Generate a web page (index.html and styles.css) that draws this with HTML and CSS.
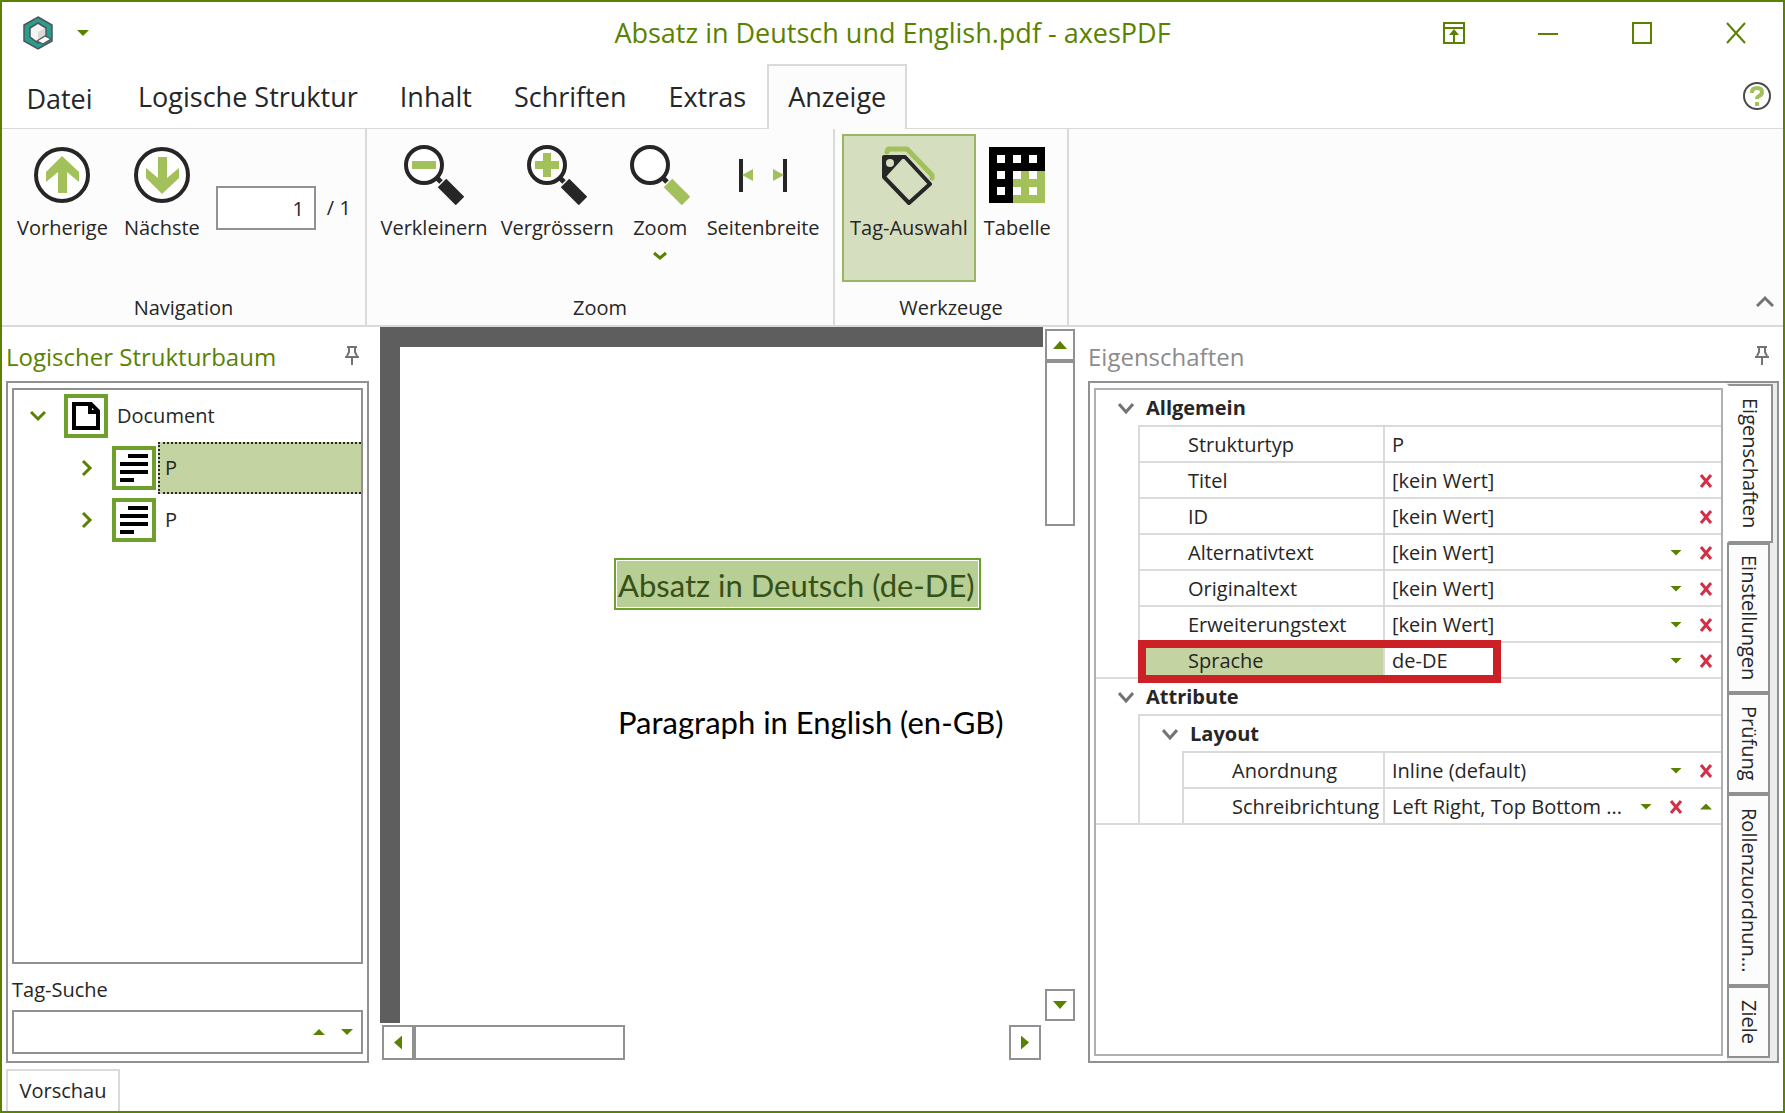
FILE: index.html
```html
<!DOCTYPE html>
<html lang="de">

<head>
  <meta charset="utf-8">
  <title>Absatz in Deutsch und English.pdf - axesPDF</title>
  <link rel="stylesheet" href="styles.css">
</head>

<body>
  <header class="titlebar">
    <div class="quick-access">
      <svg width="30" height="34" viewBox="0 0 30 34">
        <path d="M15 1 L29 9 V25 L15 33 L1 25 V9 Z" fill="#2a9d8f" stroke="#4d5557" stroke-width="1.5" />
        <path d="M15 7 L23 12 V21 L15 27 L7 21 V12 Z" fill="#f4f4f4" stroke="#4d5557" stroke-width="1.5" />
        <path d="M15 16 L22 12 V21 L15 26 Z" fill="#d9d9d9" />
        <path d="M14 25 L22 20 L28 23 L20 28 Z" fill="#fff" stroke="#4d5557" stroke-width="1.2" />
      </svg>
      <button class="plain" aria-label="Schnellzugriff"><i class="tri tri-down"></i></button>
    </div>
    <h1>Absatz in Deutsch und English.pdf - axesPDF</h1>
    <div class="window-buttons">
      <button aria-label="Menüband">
        <svg width="22" height="22" viewBox="0 0 22 22" fill="none" stroke="#5a8200" stroke-width="2">
          <path d="M1 1 H21 V21 H1 Z M1 6 H21 M11 21 V10" />
          <path d="M6 13 L11 7 L16 13 Z" fill="#5a8200" stroke="none" />
        </svg>
      </button>
      <button aria-label="Minimieren">
        <svg width="20" height="22" viewBox="0 0 20 22"><path d="M0 12 H20" stroke="#5a8200" stroke-width="2" /></svg>
      </button>
      <button aria-label="Maximieren">
        <svg width="20" height="22" viewBox="0 0 20 22"><path d="M1 1 H19 V21 H1 Z" fill="none" stroke="#5a8200" stroke-width="2" /></svg>
      </button>
      <button aria-label="Schliessen">
        <svg width="20" height="22" viewBox="0 0 20 22"><path d="M1 1 L19 21 M19 1 L1 21" stroke="#5a8200" stroke-width="2" /></svg>
      </button>
    </div>
  </header>

  <nav class="tabs">
    <button class="tab tab-file">Datei</button>
    <button class="tab">Logische Struktur</button>
    <button class="tab">Inhalt</button>
    <button class="tab">Schriften</button>
    <button class="tab">Extras</button>
    <button class="tab active">Anzeige</button>
    <button class="plain help" aria-label="Hilfe">
      <svg width="30" height="30" viewBox="0 0 30 30" fill="none">
        <circle cx="15" cy="15" r="13" stroke="#4a4a4a" stroke-width="2" />
        <path d="M10 12 V11 Q10 7 15 7 Q20 7 20 11 Q20 14 17 15 Q15 16 15 18" stroke="#a2c15a" stroke-width="4" />
        <path d="M13 21 H17 V25 H13 Z" fill="#a2c15a" />
      </svg>
    </button>
  </nav>

  <section class="ribbon">
    <div class="group group-nav">
      <div class="tools">
        <button class="tool">
          <svg width="58" height="60" viewBox="0 0 58 58">
            <circle cx="29" cy="29" r="26" fill="#fff" stroke="#262626" stroke-width="4" />
            <path d="M29 10 L46 26 V36 L34 26 V47 H25 V26 L13 36 V26 Z" fill="#a2c15a" />
          </svg>
          Vorherige
        </button>
        <button class="tool">
          <svg width="58" height="60" viewBox="0 0 58 58">
            <circle cx="29" cy="29" r="26" fill="#fff" stroke="#262626" stroke-width="4" />
            <path d="M29 48 L46 32 V22 L34 32 V11 H25 V32 L13 22 V32 Z" fill="#a2c15a" />
          </svg>
          Nächste
        </button>
        <div class="page-number">
          <input type="text" value="1" id="page-number" aria-label="Seite">
          <label for="page-number">/ 1</label>
        </div>
      </div>
      <h2>Navigation</h2>
    </div>

    <div class="group group-zoom">
      <div class="tools">
        <button class="tool">
          <svg width="60" height="60" viewBox="0 0 60 60">
            <circle cx="20" cy="20" r="18" fill="#fff" stroke="#262626" stroke-width="4" />
            <path d="M32 32 L37 37" stroke="#262626" stroke-width="5" />
            <path d="M38 38 L56 56" stroke="#262626" stroke-width="12" />
            <path d="M8 16 H32 V24 H8 Z" fill="#a2c15a" />
          </svg>
          Verkleinern
        </button>
        <button class="tool">
          <svg width="60" height="60" viewBox="0 0 60 60">
            <circle cx="20" cy="20" r="18" fill="#fff" stroke="#262626" stroke-width="4" />
            <path d="M32 32 L37 37" stroke="#262626" stroke-width="5" />
            <path d="M38 38 L56 56" stroke="#262626" stroke-width="12" />
            <path d="M8 16 H16 V8 H24 V16 H32 V24 H24 V32 H16 V24 H8 Z" fill="#a2c15a" />
          </svg>
          Vergrössern
        </button>
        <button class="tool">
          <svg width="60" height="60" viewBox="0 0 60 60">
            <circle cx="20" cy="20" r="18" fill="#fff" stroke="#262626" stroke-width="4" />
            <path d="M32 32 L37 37" stroke="#262626" stroke-width="5" />
            <path d="M38 38 L56 56" stroke="#a2c15a" stroke-width="12" />
          </svg>
          Zoom
          <svg class="more" width="14" height="10" viewBox="0 0 14 10"><path d="M1 2 L7 7 L13 2" fill="none" stroke="#5a8200" stroke-width="3" /></svg>
        </button>
        <button class="tool">
          <svg width="50" height="60" viewBox="0 0 50 60">
            <path d="M1 14 H5 V47 H1 Z M45 14 H49 V47 H45 Z" fill="#262626" />
            <path d="M4 30 L15 24 V36 Z M46 30 L35 24 V36 Z" fill="#a2c15a" />
          </svg>
          Seitenbreite
        </button>
      </div>
      <h2>Zoom</h2>
    </div>

    <div class="group group-tools">
      <div class="tools">
        <button class="tool pressed">
          <svg width="58" height="60" viewBox="0 0 58 58" fill="none">
            <path d="M7 6 L8 3 H27 L52 29 V32" stroke="#a2c15a" stroke-width="5" stroke-linejoin="round" stroke-linecap="round" />
            <path d="M4 11 H25 L50 38 L29 57 L4 31 Z" fill="#d5debf" stroke="#262626" stroke-width="4" stroke-linejoin="round" />
            <path d="M3 10 H25 L5 32 Z" fill="#262626" />
            <circle cx="10" cy="17" r="4" fill="#d5debf" />
          </svg>
          Tag-Auswahl
        </button>
        <button class="tool">
          <svg width="58" height="60" viewBox="0 0 58 58">
            <path d="M1 1 H57 V57 H1 Z" fill="#000" />
            <path d="M25 25 H57 V57 H25 Z" fill="#a2c15a" />
            <path d="M9 9h8v8h-8z M25 9h8v8h-8z M41 9h8v8h-8z M9 25h8v8h-8z M25 25h8v8h-8z M41 25h8v8h-8z M9 41h8v8h-8z M25 41h8v8h-8z M41 41h8v8h-8z" fill="#fff" />
          </svg>
          Tabelle
        </button>
      </div>
      <h2>Werkzeuge</h2>
    </div>

    <button class="plain collapse" aria-label="Menüband reduzieren">
      <svg width="18" height="12" viewBox="0 0 18 12"><path d="M1 11 L9 3 L17 11" fill="none" stroke="#737373" stroke-width="3" /></svg>
    </button>
  </section>

  <main class="workspace">
    <aside class="panel panel-tree">
      <div class="panel-head">
        <h2>Logischer Strukturbaum</h2>
        <button class="plain" aria-label="Anheften">
          <svg width="14" height="19" viewBox="0 0 14 19" fill="none" stroke="#737373" stroke-width="2"><path d="M2 1 H12 M4 1 V6 L2 10 M10 1 V6 L12 10 M0 11 H14 M7 11 V19" /></svg>
        </button>
      </div>
      <div class="panel-body">
        <ul class="tree">
          <li>
            <button class="plain toggle" aria-label="Zuklappen">
              <svg width="16" height="16" viewBox="0 0 16 16"><path d="M1 4 L8 11 L15 4" fill="none" stroke="#5a8200" stroke-width="3" /></svg>
            </button>
            <svg width="44" height="44" viewBox="0 0 44 44">
              <path d="M2 2 H42 V42 H2 Z" fill="#fff" stroke="#6fa02d" stroke-width="4" />
              <path d="M10 10 H27 L34 17 V34 H10 Z" fill="#fff" stroke="#000" stroke-width="4" />
              <path d="M24 10 H28 V16 H34 V20 H24 Z" fill="#000" />
            </svg>
            <span class="node">Document</span>
          </li>
          <li class="child">
            <button class="plain toggle" aria-label="Aufklappen">
              <svg width="16" height="16" viewBox="0 0 16 16"><path d="M5 1 L12 8 L5 15" fill="none" stroke="#5a8200" stroke-width="3" /></svg>
            </button>
            <svg width="44" height="44" viewBox="0 0 44 44">
              <path d="M2 2 H42 V42 H2 Z" fill="#fff" stroke="#6fa02d" stroke-width="4" />
              <path d="M16 10 H36 M8 18 H36 M8 26 H36 M8 34 H22" stroke="#000" stroke-width="4" />
            </svg>
            <span class="node selected">P</span>
          </li>
          <li class="child">
            <button class="plain toggle" aria-label="Aufklappen">
              <svg width="16" height="16" viewBox="0 0 16 16"><path d="M5 1 L12 8 L5 15" fill="none" stroke="#5a8200" stroke-width="3" /></svg>
            </button>
            <svg width="44" height="44" viewBox="0 0 44 44">
              <path d="M2 2 H42 V42 H2 Z" fill="#fff" stroke="#6fa02d" stroke-width="4" />
              <path d="M16 10 H36 M8 18 H36 M8 26 H36 M8 34 H22" stroke="#000" stroke-width="4" />
            </svg>
            <span class="node">P</span>
          </li>
        </ul>
        <label for="tag-search">Tag-Suche</label>
        <div class="search">
          <input type="text" id="tag-search">
          <button class="plain" aria-label="Vorheriger Treffer"><i class="tri tri-up"></i></button>
          <button class="plain" aria-label="Nächster Treffer"><i class="tri tri-down"></i></button>
        </div>
      </div>
    </aside>

    <section class="viewer">
      <div class="canvas">
        <div class="page">
          <p class="highlight">Absatz in Deutsch (de-DE)</p>
          <p lang="en">Paragraph in English (en-GB)</p>
        </div>
      </div>
      <div class="scroll-v">
        <button aria-label="Nach oben"><i class="tri tri-up big"></i></button>
        <div class="thumb"></div>
        <button class="end" aria-label="Nach unten"><i class="tri tri-down big"></i></button>
      </div>
      <div class="scroll-h">
        <button aria-label="Nach links"><i class="tri tri-left"></i></button>
        <div class="thumb"></div>
        <button class="end" aria-label="Nach rechts"><i class="tri tri-right"></i></button>
      </div>
    </section>

    <aside class="panel panel-props">
      <div class="panel-head">
        <h2>Eigenschaften</h2>
        <button class="plain" aria-label="Anheften">
          <svg width="14" height="19" viewBox="0 0 14 19" fill="none" stroke="#737373" stroke-width="2"><path d="M2 1 H12 M4 1 V6 L2 10 M10 1 V6 L12 10 M0 11 H14 M7 11 V19" /></svg>
        </button>
      </div>
      <div class="panel-body">
        <div class="grid-box">
          <table>
            <colgroup>
              <col class="col-indent">
              <col class="col-level">
              <col class="col-name">
              <col>
            </colgroup>
            <tr class="head">
              <th colspan="4"><svg width="16" height="12" viewBox="0 0 16 12"><path d="M1 1 L8 9 L15 1" fill="none" stroke="#737373" stroke-width="3" /></svg>Allgemein</th>
            </tr>
            <tr>
              <td></td>
              <td class="name" colspan="2">Strukturtyp</td>
              <td class="value"><div>P</div></td>
            </tr>
            <tr>
              <td></td>
              <td class="name" colspan="2">Titel</td>
              <td class="value"><div><span>[kein Wert]</span><button class="plain" aria-label="Löschen"><svg width="14" height="14" viewBox="0 0 14 14"><path d="M2 1 L12 13 M12 1 L2 13" stroke="#d32f45" stroke-width="3" /></svg></button></div></td>
            </tr>
            <tr>
              <td></td>
              <td class="name" colspan="2">ID</td>
              <td class="value"><div><span>[kein Wert]</span><button class="plain" aria-label="Löschen"><svg width="14" height="14" viewBox="0 0 14 14"><path d="M2 1 L12 13 M12 1 L2 13" stroke="#d32f45" stroke-width="3" /></svg></button></div></td>
            </tr>
            <tr>
              <td></td>
              <td class="name" colspan="2">Alternativtext</td>
              <td class="value"><div><span>[kein Wert]</span><button class="plain" aria-label="Öffnen"><i class="tri tri-down"></i></button><button class="plain" aria-label="Löschen"><svg width="14" height="14" viewBox="0 0 14 14"><path d="M2 1 L12 13 M12 1 L2 13" stroke="#d32f45" stroke-width="3" /></svg></button></div></td>
            </tr>
            <tr>
              <td></td>
              <td class="name" colspan="2">Originaltext</td>
              <td class="value"><div><span>[kein Wert]</span><button class="plain" aria-label="Öffnen"><i class="tri tri-down"></i></button><button class="plain" aria-label="Löschen"><svg width="14" height="14" viewBox="0 0 14 14"><path d="M2 1 L12 13 M12 1 L2 13" stroke="#d32f45" stroke-width="3" /></svg></button></div></td>
            </tr>
            <tr>
              <td></td>
              <td class="name" colspan="2">Erweiterungstext</td>
              <td class="value"><div><span>[kein Wert]</span><button class="plain" aria-label="Öffnen"><i class="tri tri-down"></i></button><button class="plain" aria-label="Löschen"><svg width="14" height="14" viewBox="0 0 14 14"><path d="M2 1 L12 13 M12 1 L2 13" stroke="#d32f45" stroke-width="3" /></svg></button></div></td>
            </tr>
            <tr>
              <td></td>
              <td class="name marked" colspan="2">Sprache<div class="marker"></div></td>
              <td class="value"><div><span>de-DE</span><button class="plain" aria-label="Öffnen"><i class="tri tri-down"></i></button><button class="plain" aria-label="Löschen"><svg width="14" height="14" viewBox="0 0 14 14"><path d="M2 1 L12 13 M12 1 L2 13" stroke="#d32f45" stroke-width="3" /></svg></button></div></td>
            </tr>
            <tr class="head">
              <th class="line" colspan="4"><svg width="16" height="12" viewBox="0 0 16 12"><path d="M1 1 L8 9 L15 1" fill="none" stroke="#737373" stroke-width="3" /></svg>Attribute</th>
            </tr>
            <tr class="head">
              <td></td>
              <th class="line sub" colspan="3"><svg width="16" height="12" viewBox="0 0 16 12"><path d="M1 1 L8 9 L15 1" fill="none" stroke="#737373" stroke-width="3" /></svg>Layout</th>
            </tr>
            <tr>
              <td></td>
              <td class="level"></td>
              <td class="name">Anordnung</td>
              <td class="value"><div><span>Inline (default)</span><button class="plain" aria-label="Öffnen"><i class="tri tri-down"></i></button><button class="plain" aria-label="Löschen"><svg width="14" height="14" viewBox="0 0 14 14"><path d="M2 1 L12 13 M12 1 L2 13" stroke="#d32f45" stroke-width="3" /></svg></button></div></td>
            </tr>
            <tr class="last">
              <td></td>
              <td class="level"></td>
              <td class="name">Schreibrichtung</td>
              <td class="value"><div><span>Left Right, Top Bottom ...</span><button class="plain" aria-label="Öffnen"><i class="tri tri-down"></i></button><button class="plain" aria-label="Löschen"><svg width="14" height="14" viewBox="0 0 14 14"><path d="M2 1 L12 13 M12 1 L2 13" stroke="#d32f45" stroke-width="3" /></svg></button><button class="plain" aria-label="Übernehmen"><i class="tri tri-up"></i></button></div></td>
            </tr>
          </table>
        </div>
        <div class="side-tabs">
          <button class="active">Eigenschaften</button>
          <button>Einstellungen</button>
          <button>Prüfung</button>
          <button>Rollenzuordnun...</button>
          <button>Ziele</button>
        </div>
      </div>
    </aside>
  </main>

  <footer>
    <button>Vorschau</button>
  </footer>
</body>

</html>
```
FILE: styles.css
```css
* {
  box-sizing: border-box;
}

body {
  margin: 0;
  min-height: 100vh;
  display: flex;
  flex-direction: column;
  border: 2px solid #5a8200;
  background: #fff;
  color: #262626;
  font-family: "Open Sans", "Noto Sans", sans-serif;
  font-size: 20px;
  line-height: 24px;
}

button,
input {
  font: inherit;
  color: inherit;
  margin: 0;
  padding: 0;
  border: 0;
  border-radius: 0;
  background: none;
}

h1,
h2,
p,
ul {
  margin: 0;
  padding: 0;
  font-weight: normal;
}

svg {
  display: block;
  flex: none;
}

.plain {
  display: flex;
  align-items: center;
  justify-content: center;
}

/* small triangles */
.tri {
  width: 12px;
  height: 6px;
  background: #5a8200;
}

.tri-down {
  clip-path: polygon(0 0, 100% 0, 50% 100%);
}

.tri-up {
  clip-path: polygon(0 100%, 100% 100%, 50% 0);
}

.tri-left,
.tri-right {
  width: 8px;
  height: 14px;
}

.tri-left {
  clip-path: polygon(100% 0, 100% 100%, 0 50%);
}

.tri-right {
  clip-path: polygon(0 0, 0 100%, 100% 50%);
}

.tri.big {
  width: 14px;
  height: 8px;
}

/* title bar */
.titlebar {
  display: grid;
  grid-template-columns: 1fr auto 1fr;
  align-items: center;
  height: 62px;
}

.titlebar h1 {
  color: #5a8200;
  font-size: 27px;
  line-height: 32px;
}

.quick-access {
  display: flex;
  align-items: center;
  gap: 24px;
  padding-left: 21px;
}

.window-buttons {
  display: flex;
  justify-content: flex-end;
}

.window-buttons button {
  width: 94px;
  height: 60px;
  display: flex;
  align-items: center;
  justify-content: center;
}

/* ribbon */
.tabs {
  display: flex;
  height: 65px;
  box-shadow: inset 0 -1px #dadada;
}

.tab {
  padding: 0 19px 2px;
  border: 2px solid transparent;
  border-bottom: 0;
  font-size: 27px;
}

.tab-file {
  width: 115px;
  padding: 2px 0 0;
}

.tab.active {
  border-color: #dadada;
  background: #fcfcfc;
}

.help {
  margin: 0 11px 0 auto;
  padding-bottom: 2px;
}

.ribbon {
  display: flex;
  height: 198px;
  border-bottom: 2px solid #dadada;
  background: #fcfcfc;
}

.group {
  display: flex;
  flex-direction: column;
  padding: 5px 7px 0;
  border-right: 2px solid #dadada;
}

.group-nav {
  width: 365px;
}

.group-zoom {
  width: 468px;
}

.group-tools {
  width: 234px;
}

.group h2 {
  margin-top: 14px;
  font-size: 20px;
  text-align: center;
}

.tools {
  display: flex;
  height: 148px;
}

.tool {
  display: flex;
  flex-direction: column;
  align-items: center;
  gap: 11px;
  min-width: 80px;
  padding: 11px 8px 0;
  white-space: nowrap;
}

.tool.pressed {
  padding: 9px 6px 0;
  border: 2px solid #9ab563;
  background: #d5debf;
}

.page-number {
  display: flex;
  align-items: center;
  gap: 11px;
  height: 44px;
  margin: 52px 0 0 8px;
}

.page-number input {
  width: 100px;
  height: 44px;
  padding-right: 10px;
  border: 2px solid #919191;
  background: #fff;
  text-align: right;
}

.collapse {
  align-self: flex-end;
  margin: 0 9px 18px auto;
}

/* workspace */
.workspace {
  flex: 1;
  display: flex;
}

.panel {
  display: flex;
  flex-direction: column;
  padding-bottom: 4px;
}

.panel-tree {
  width: 367px;
  margin-right: 11px;
  padding-left: 4px;
}

.panel-props {
  width: 695px;
  margin-left: 11px;
  padding-right: 4px;
}

.panel-head {
  display: flex;
  align-items: center;
  justify-content: space-between;
  height: 54px;
  padding: 5px 10px 0 0;
}

.panel-head h2 {
  font-size: 24px;
  line-height: 30px;
  color: #5a8200;
}

.panel-props h2 {
  color: #8c8c8c;
}

.panel-head .plain {
  margin-bottom: 3px;
}

.panel-body {
  flex: 1;
  display: flex;
  border: 2px solid #919191;
}

.panel-tree .panel-body {
  flex-direction: column;
  padding: 5px 4px 7px;
}

.tree {
  flex: 1;
  border: 2px solid #919191;
  list-style: none;
}

.tree li {
  display: flex;
  align-items: center;
  height: 52px;
}

.toggle {
  width: 50px;
  padding: 0 3px 0 0;
}

.child {
  padding-left: 48px;
}

.node {
  flex: 1;
  margin-left: 2px;
  padding: 12px 5px;
  border: 2px solid transparent;
}

.node.selected {
  border: 2px dotted #262626;
  border-right: 0;
  background: #c3d3a1;
}

.panel-tree label {
  padding: 14px 0 8px;
}

.search {
  display: flex;
  height: 44px;
  border: 2px solid #919191;
}

.search input {
  flex: 1;
  min-width: 0;
  padding: 0 8px;
}

.search button {
  width: 28px;
}

/* document viewer */
.viewer {
  flex: 1;
  display: grid;
  grid-template-columns: 1fr 34px;
  grid-template-rows: 1fr 44px;
}

.canvas {
  display: flex;
  padding: 20px 0 0 20px;
  background: #5e5e5e;
}

.page {
  flex: 1;
  padding: 211px 0 0 214px;
  background: #fff;
  color: #000;
  font-family: Lato, sans-serif;
  font-size: 31px;
  line-height: 46px;
  white-space: nowrap;
}

.page p {
  padding-left: 4px;
}

.highlight {
  width: 367px;
  height: 52px;
  margin-bottom: 89px;
  border: 2px solid #6fa02d;
  box-shadow: inset 0 0 0 1px #fff;
  background: #b7ce95;
  color: #375016;
}

.page .highlight {
  padding: 2px;
}

.scroll-v,
.scroll-h {
  display: flex;
}

.scroll-v {
  flex-direction: column;
  padding: 2px;
}

.scroll-h {
  padding: 2px 2px 7px;
}

.scroll-v button,
.scroll-h button {
  display: flex;
  align-items: center;
  justify-content: center;
  width: 32px;
  border: 2px solid #919191;
}

.scroll-v button {
  width: 30px;
  height: 32px;
}

.thumb {
  border: 2px solid #919191;
}

.scroll-v .thumb {
  width: 30px;
  height: 165px;
}

.scroll-h .thumb {
  width: 211px;
}

.scroll-v .end {
  margin-top: auto;
}

.scroll-h .end {
  margin-left: auto;
}

/* properties */
.grid-box {
  flex: 1;
  margin: 5px 4px;
  border: 2px solid #b0b0b0;
}

table {
  width: 100%;
  table-layout: fixed;
  border-spacing: 0;
}

.col-indent {
  width: 42px;
}

.col-level {
  width: 44px;
}

.col-name {
  width: 201px;
}

td,
th {
  height: 36px;
  padding: 1px 0 0;
  white-space: nowrap;
}

.head td,
.head th {
  height: 37px;
}

.head:first-child th {
  height: 35px;
}

th {
  padding-left: 22px;
  text-align: left;
}

th svg {
  display: inline-block;
  margin-right: 12px;
}

.line {
  border-top: 2px solid #dadada;
}

.sub,
.level {
  border-left: 2px solid #dadada;
}

.name,
.value {
  border-top: 2px solid #dadada;
  border-left: 2px solid #dadada;
}

.name {
  padding-left: 48px;
}

.value div {
  display: flex;
  padding-left: 7px;
}

.value span {
  flex: 1;
}

.value button {
  width: 30px;
}

.last td {
  height: 38px;
  border-bottom: 2px solid #dadada;
}

.marked {
  position: relative;
  background: #c3d3a1;
}

.marker {
  position: absolute;
  left: -2px;
  top: -3px;
  width: 363px;
  height: 43px;
  border: 8px solid #cc2027;
}

.side-tabs {
  display: flex;
  flex-direction: column;
  width: 50px;
  padding: 1px 0 3px;
  background: #ececec;
}

.side-tabs button {
  width: 43px;
  height: 101px;
  padding: 0 7px;
  border: 2px solid #919191;
  background: #fcfcfc;
  writing-mode: vertical-rl;
  white-space: nowrap;
}

.side-tabs .active {
  width: 46px;
  height: 159px;
  border-left-color: #fff;
  background: #fff;
}

.side-tabs button:nth-child(2) {
  height: 150px;
}

.side-tabs button:nth-child(4) {
  height: 192px;
}

.side-tabs button:nth-child(5) {
  height: 72px;
}

footer {
  padding: 2px 4px 0;
}

footer button {
  display: block;
  width: 114px;
  height: 42px;
  border: 2px solid #dadada;
  border-bottom: 0;
}
```
